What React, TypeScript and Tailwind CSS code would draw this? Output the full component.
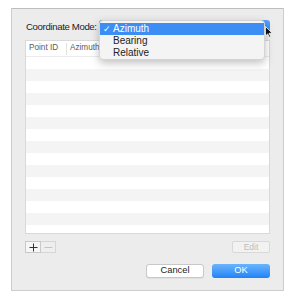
import React from 'react';

const ROWS = Array.from({ length: 15 });

export default function App() {
  return (
    <div className="w-[303px] h-[302px] bg-white pt-[8px] pl-[11px] font-['Liberation_Sans',Arial,sans-serif] text-[#222]">
      {/* Dialog sheet */}
      <div className="relative w-[273px] h-[283px] bg-[#ececec] border border-[#cdcdcd] border-t-[#bdbdbd] px-[13px] pt-[11px] flex flex-col">
        {/* Coordinate mode row */}
        <div className="h-[13px] flex items-center">
          <span className="text-[9.6px] leading-none pl-[1px] tracking-[-0.35px] text-[#1c1c1c]">Coordinate Mode:</span>
          <div className="ml-[2px] flex-1 h-[13px] rounded-[3px] bg-gradient-to-b from-[#5aa5f8] to-[#2d83f3]" />
        </div>

        {/* Table */}
        <div className="mt-[7px] h-[194px] bg-white border border-[#d9d9d9] overflow-hidden flex flex-col">
          <div className="h-[16px] shrink-0 flex items-center text-[8.2px] text-[#5a5a5a] border-b border-[#ececec]">
            <div className="w-[41px] h-[12px] flex items-center pl-[3px] border-r border-[#e2e2e2]">Point ID</div>
            <div className="pl-[3px]">Azimuth</div>
          </div>
          {ROWS.map((_, i) => (
            <div key={i} className={`h-[12px] shrink-0 ${i % 2 === 0 ? 'bg-white' : 'bg-[#f4f4f4]'}`} />
          ))}
        </div>

        {/* +/- and Edit */}
        <div className="mt-[7px] h-[12px] flex items-center justify-between">
          <div className="flex">
            <div className="w-[16px] h-[12px] flex items-center justify-center bg-[#f6f6f6] border border-[#c9c9c9]">
              <svg width="9" height="9" viewBox="0 0 9 9"><path d="M4.5 0.5v8M0.5 4.5h8" stroke="#333" strokeWidth="1" /></svg>
            </div>
            <div className="w-[15px] h-[12px] flex items-center justify-center bg-[#eeeeee] border border-l-0 border-[#d6d6d6]">
              <svg width="9" height="9" viewBox="0 0 9 9"><path d="M0.5 4.5h8" stroke="#c4c4c4" strokeWidth="1" /></svg>
            </div>
          </div>
          <div className="w-[38px] h-[12px] flex items-center justify-center bg-[#f2f2f2] border border-[#d8d8d8] rounded-[2px] text-[8.5px] text-[#bdbdbd]">Edit</div>
        </div>

        {/* Cancel / OK */}
        <div className="mt-[11px] h-[14px] flex justify-end gap-[8px]">
          <div className="w-[58px] h-[14px] flex items-center justify-center bg-white border border-[#c8c8c8] rounded-[3px] text-[9.3px] text-[#222] shadow-[0_0.5px_0.5px_rgba(0,0,0,0.1)]">Cancel</div>
          <div className="w-[58px] h-[14px] flex items-center justify-center rounded-[3px] text-[9.3px] text-white bg-gradient-to-b from-[#6ab4fb] to-[#1e82f8]">OK</div>
        </div>

        {/* Popup menu */}
        <div className="absolute left-[87px] top-[11px] w-[166px] h-[40px] bg-[#f4f4f4] rounded-[4px] border border-[#d4d4d4] shadow-[0_3px_8px_rgba(0,0,0,0.25)] pt-[2px] text-[10px] leading-none">
          <div className="h-[12px] flex items-center bg-[#3c8ef4] text-white">
            <span className="w-[13px] pl-[3px] text-[9px]">✓</span>
            <span>Azimuth</span>
          </div>
          <div className="h-[12px] flex items-center pl-[13px]">Bearing</div>
          <div className="h-[12px] flex items-center pl-[13px]">Relative</div>
        </div>

        {/* Cursor */}
        <svg className="absolute left-[253px] top-[17px]" width="8" height="12" viewBox="0 0 8 12">
          <path d="M0.5 0.5v9.5l2.2-2.1 1.6 3.4 1.4-0.7-1.6-3.3h3.2z" fill="#111" stroke="#fff" strokeWidth="0.8" />
        </svg>
      </div>
    </div>
  );
}
